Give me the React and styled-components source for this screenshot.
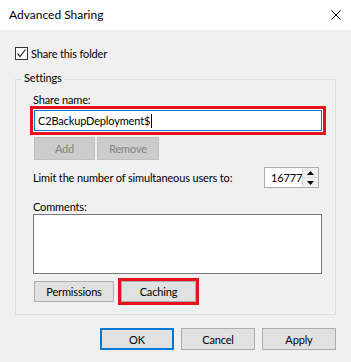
import React from "react";
import styled, { createGlobalStyle } from "styled-components";

const GlobalStyle = createGlobalStyle`
  html, body {
    margin: 0;
    padding: 0;
    background: #f0f0f0;
  }

  body {
    font-family: "Segoe UI", Lato, sans-serif;
    font-size: 11px;
    letter-spacing: -0.15px;
    color: #000;
  }
`;

export default function App() {
  return (
    <>
      <GlobalStyle />
      <Dialog>
        <TitleBar>
          <Title>Advanced Sharing</Title>
          <CloseIcon viewBox="0 0 10 10">
            <path d="M0.5 0.5 L9.5 9.5 M9.5 0.5 L0.5 9.5" />
          </CloseIcon>
        </TitleBar>

        <Body>
          <CheckRow>
            <CheckBox>
              <svg viewBox="0 0 11 11" width="11" height="11">
                <polyline points="1.5,5.5 4,8.5 9.5,1.5" />
              </svg>
            </CheckBox>
            Share this folder
          </CheckRow>

          <Group>
            <Legend>Settings</Legend>

            <Label>Share name:</Label>
            <TextInput $highlight>
              C2BackupDeployment$
              <Caret />
            </TextInput>

            <ButtonRow $top={6}>
              <Button $w={61} $h={23} disabled>
                Add
              </Button>
              <Button $w={62} $h={23} disabled>
                Remove
              </Button>
            </ButtonRow>

            <LimitRow>
              Limit the number of simultaneous users to:
              <Spinner>
                <SpinValue>16777</SpinValue>
                <SpinButtons>
                  <SpinButton>
                    <Arrow viewBox="0 0 7 4">
                      <polygon points="3.5,0 7,4 0,4" />
                    </Arrow>
                  </SpinButton>
                  <SpinButton>
                    <Arrow viewBox="0 0 7 4">
                      <polygon points="0,0 7,0 3.5,4" />
                    </Arrow>
                  </SpinButton>
                </SpinButtons>
              </Spinner>
            </LimitRow>

            <CommentsLabel>Comments:</CommentsLabel>
            <Comments />

            <ButtonRow $top={7} $gap={7}>
              <Button $w={80} $h={21}>
                Permissions
              </Button>
              <Button $w={75} $h={21} $highlight>
                Caching
              </Button>
            </ButtonRow>
          </Group>

          <Footer>
            <Button $w={74} $h={22} $default>
              OK
            </Button>
            <Button $w={74} $h={22}>
              Cancel
            </Button>
            <Button $w={74} $h={22}>
              Apply
            </Button>
          </Footer>
        </Body>
      </Dialog>
    </>
  );
}

const Dialog = styled.div`
  display: flex;
  flex-direction: column;

  width: 351px;
  height: 362px;
  overflow: hidden;

  background: #f0f0f0;
`;

const TitleBar = styled.div`
  display: flex;
  align-items: center;
  justify-content: space-between;

  height: 30px;
  padding: 0 10px 0 9px;

  background: #fff;
`;

const Title = styled.span`
  font-size: 12px;
  letter-spacing: 0;
  line-height: 16px;
`;

const CloseIcon = styled.svg`
  width: 10px;
  height: 10px;

  stroke: #000;
  stroke-width: 1;
  fill: none;
`;

const Body = styled.div`
  display: flex;
  flex-direction: column;
  flex: 1;

  padding: 17px 15px 0 15px;
`;

const CheckRow = styled.label`
  display: flex;
  align-items: center;
  gap: 3px;

  height: 13px;
  line-height: 13px;
`;

const CheckBox = styled.span`
  display: flex;
  align-items: center;
  justify-content: center;

  width: 11px;
  height: 11px;

  border: 1px solid #333;
  background: #fff;

  & polyline {
    fill: none;
    stroke: #222;
    stroke-width: 1.2;
  }
`;

const Group = styled.div`
  position: relative;
  display: flex;
  flex-direction: column;

  margin-top: 19px;
  padding: 12px 13px 12px 17px;

  border: 1px solid #dcdcdc;
`;

const Legend = styled.span`
  position: absolute;
  top: -10px;
  left: 6px;

  padding: 0 2px;
  line-height: 16px;

  background: #f0f0f0;
`;

const Label = styled.div`
  line-height: 16px;
`;

const TextInput = styled.div`
  display: flex;
  align-items: center;

  height: 21px;
  margin-top: 2px;
  margin-left: 1px;
  padding: 0 3px;
  box-sizing: border-box;

  border: 1px solid #0078d7;
  background: #fff;
  box-shadow: ${(p) =>
    p.$highlight ? "0 0 0 1px #fff, 0 0 0 4px #e8111b" : "none"};
`;

const Caret = styled.span`
  display: inline-block;

  width: 1px;
  height: 14px;
  margin-left: 1px;

  background: #000;
`;

const ButtonRow = styled.div`
  display: flex;
  gap: ${(p) => p.$gap || 2}px;

  margin-top: ${(p) => p.$top}px;
  margin-left: 1px;
`;

const Button = styled.button`
  width: ${(p) => p.$w}px;
  height: ${(p) => p.$h}px;
  padding: 0;
  box-sizing: border-box;

  font-family: inherit;
  font-size: 11px;
  letter-spacing: inherit;
  color: #000;

  background: #e1e1e1;
  border: ${(p) => (p.$default ? "2px solid #0078d7" : "1px solid #adadad")};
  box-shadow: ${(p) => (p.$highlight ? "0 0 0 3px #e8111b" : "none")};

  &:disabled {
    color: #838383;
    background: #cccccc;
    border-color: #bfbfbf;
  }
`;

const LimitRow = styled.div`
  display: flex;
  align-items: center;
  justify-content: space-between;

  height: 21px;
  margin-top: 7px;
  padding-right: 3px;
  white-space: nowrap;
`;

const Spinner = styled.div`
  display: flex;

  width: 55px;
  height: 21px;
  box-sizing: border-box;

  border: 1px solid #adadad;
  background: #fff;
`;

const SpinValue = styled.span`
  flex: 1;
  overflow: hidden;

  padding-left: 6px;
  line-height: 19px;
`;

const SpinButtons = styled.div`
  display: flex;
  flex-direction: column;

  width: 15px;

  border-left: 1px solid #dadada;
`;

const SpinButton = styled.div`
  display: flex;
  align-items: center;
  justify-content: center;
  flex: 1;

  background: #f0f0f0;

  & + & {
    border-top: 1px solid #dadada;
  }
`;

const Arrow = styled.svg`
  width: 7px;
  height: 4px;

  fill: #000;
`;

const CommentsLabel = styled.div`
  margin-top: 12px;
  line-height: 14px;
`;

const Comments = styled.div`
  height: 60px;
  box-sizing: border-box;

  border: 1px solid #7a7a7a;
  background: #fff;
`;

const Footer = styled.div`
  display: flex;
  justify-content: flex-end;
  gap: 7px;

  margin-top: 13px;
`;
